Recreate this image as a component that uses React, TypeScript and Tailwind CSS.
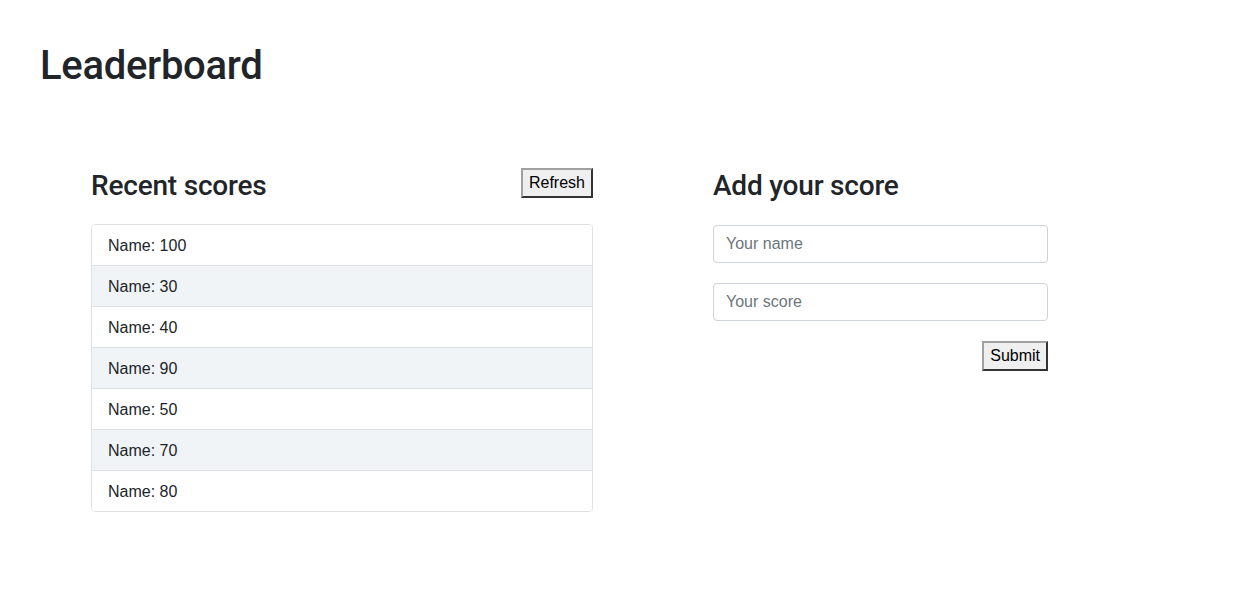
const scores = [100, 30, 40, 90, 50, 70, 80];

function RawButton({ children }: { children: React.ReactNode }) {
  return (
    <button className="h-[30px] px-[6px] bg-[#efefef] border-2 border-[#767676] border-t-[#a0a0a0] border-l-[#a0a0a0] border-r-[#333] border-b-[#333] text-[16px] leading-none text-black font-['Liberation_Sans',Arial,sans-serif]">
      {children}
    </button>
  );
}

export default function App() {
  return (
    <div className="min-h-[612px] bg-white text-[#212529] font-['Liberation_Sans',Arial,sans-serif]">
      <div className="px-10 pt-[42px]">
        <h1 className="text-[40px] leading-[48px] font-medium font-['Roboto',sans-serif] tracking-[-0.3px]">Leaderboard</h1>
      </div>

      <div className="flex pl-[91px] mt-[78px] gap-[120px]">
        <div className="w-[502px]">
          <div className="flex items-start justify-between h-[56px]">
            <h3 className="text-[28px] leading-[34px] font-medium mt-[1px] font-['Roboto',sans-serif] tracking-[-0.2px]">Recent scores</h3>
            <RawButton>Refresh</RawButton>
          </div>
          <ul className="border border-[#dee2e6] rounded-[4px] overflow-hidden">
            {scores.map((s, i) => (
              <li
                key={i}
                className={`px-4 pt-[9px] pb-[7px] text-[16px] leading-[24px] ${i > 0 ? 'border-t border-[#dee2e6]' : ''} ${i % 2 === 1 ? 'bg-[#f0f4f7]' : 'bg-white'}`}
              >
                Name: {s}
              </li>
            ))}
          </ul>
        </div>

        <div className="w-[335px]">
          <div className="h-[56px]">
            <h3 className="text-[28px] leading-[34px] font-medium mt-[1px] font-['Roboto',sans-serif] tracking-[-0.2px]">Add your score</h3>
          </div>
          <input
            placeholder="Your name"
            className="block w-full h-[38px] px-3 border border-[#ced4da] rounded-[4px] text-[16px] placeholder:text-[#6c757d] outline-none"
          />
          <input
            placeholder="Your score"
            className="block w-full h-[38px] px-3 mt-5 border border-[#ced4da] rounded-[4px] text-[16px] placeholder:text-[#6c757d] outline-none"
          />
          <div className="flex justify-end mt-5">
            <RawButton>Submit</RawButton>
          </div>
        </div>
      </div>
    </div>
  );
}
